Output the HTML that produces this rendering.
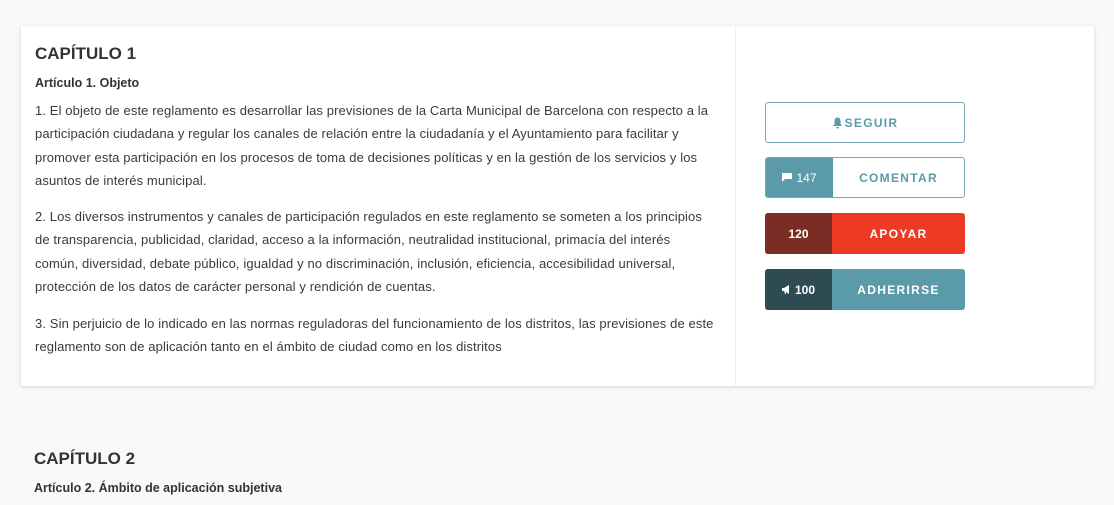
<!DOCTYPE html>
<html><head><meta charset="utf-8"><style>
body{margin:0;background:#f9f9f9;font-family:"Liberation Sans",sans-serif;color:#3d3d3d;width:1114px;height:505px;overflow:hidden;position:relative}
.card{position:absolute;left:21px;top:26px;width:1073px;height:360px;background:#fff;box-shadow:0 1px 4px rgba(0,0,0,.15)}
.div{position:absolute;left:714px;top:0;width:1px;height:360px;background:#eee}
h2{position:absolute;margin:0;font-size:17px;font-weight:bold;color:#333}
h3{position:absolute;margin:0;font-size:12.5px;font-weight:bold;color:#333}
p{position:absolute;margin:0;left:14px;font-size:13px;line-height:23.3px;white-space:nowrap;color:#3a3a3a;letter-spacing:0.11px}
.btn{position:absolute;left:744px;width:200px;height:41px;border-radius:3px;box-sizing:border-box;font-size:12px;font-weight:bold;letter-spacing:1.3px;display:flex;overflow:hidden}
.btn span{display:flex;align-items:center;justify-content:center}
.n{width:67px;color:#fff;letter-spacing:0}
.l{flex:1}
</style></head><body>
<div class="card">
<div class="div"></div>
<h2 style="left:14px;top:18px">CAPÍTULO 1</h2>
<h3 style="left:14px;top:50px">Artículo 1. Objeto</h3>
<p style="top:73px">1. El objeto de este reglamento es desarrollar las previsiones de la Carta Municipal de Barcelona con respecto a la<br>participación ciudadana y regular los canales de relación entre la ciudadanía y el Ayuntamiento para facilitar y<br>promover esta participación en los procesos de toma de decisiones políticas y en la gestión de los servicios y los<br>asuntos de interés municipal.</p>
<p style="top:179px">2. Los diversos instrumentos y canales de participación regulados en este reglamento se someten a los principios<br>de transparencia, publicidad, claridad, acceso a la información, neutralidad institucional, primacía del interés<br>común, diversidad, debate público, igualdad y no discriminación, inclusión, eficiencia, accesibilidad universal,<br>protección de los datos de carácter personal y rendición de cuentas.</p>
<p style="top:286px">3. Sin perjuicio de lo indicado en las normas reguladoras del funcionamiento de los distritos, las previsiones de este<br>reglamento son de aplicación tanto en el ámbito de ciudad como en los distritos</p>
<div class="btn" style="top:76px;border:1px solid #79a9b4;color:#5b9aa8"><span class="l"><svg width="11" height="12" viewBox="0 0 11 12" style="margin-right:2px"><path d="M5.5 0.5C3.5 0.5 2.5 2 2.5 4V7L1 9H10L8.5 7V4C8.5 2 7.5 0.5 5.5 0.5ZM4 10H7A1.5 1.5 0 0 1 4 10Z" fill="#5b9aa8"/></svg>SEGUIR</span></div>
<div class="btn" style="top:131px;border:1px solid #79a9b4;color:#5b9aa8"><span class="n" style="background:#5b9aa8;font-weight:normal"><svg width="10" height="9" viewBox="0 0 10 9" style="margin-right:4px"><path d="M0 0H10V6H3L0 9Z" fill="#fff"/></svg>147</span><span class="l">COMENTAR</span></div>
<div class="btn" style="top:187px;background:#ed3a24;color:#fff"><span class="n" style="background:#7b2c25">120</span><span class="l">APOYAR</span></div>
<div class="btn" style="top:243px;background:#5b9aa8;color:#fff"><span class="n" style="background:#2f4b52"><svg width="9" height="9" viewBox="0 0 9 9" style="margin-right:4px"><path d="M0 3H2L7 0V9L2 6H0ZM2 6L3 9H4L3.5 6.5Z" fill="#fff"/></svg>100</span><span class="l">ADHERIRSE</span></div>
</div>
<h2 style="left:34px;top:449px">CAPÍTULO 2</h2>
<h3 style="left:34px;top:481px">Artículo 2. Ámbito de aplicación subjetiva</h3>
</body></html>
